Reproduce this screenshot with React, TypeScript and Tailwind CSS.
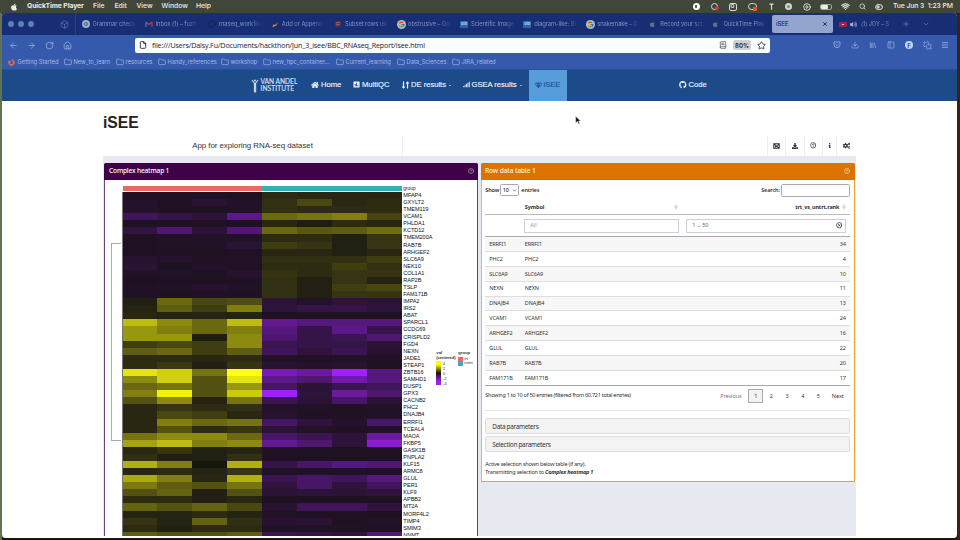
import React from "react";
import {
  FaApple, FaGithub, FaHome, FaSignal, FaGem, FaDownload, FaCogs, FaInfo,
  FaFirefoxBrowser, FaPoll, FaVolumeUp, FaLongArrowAltDown, FaLongArrowAltUp,
} from "react-icons/fa";
import { FcGoogle } from "react-icons/fc";
import {
  ArrowLeft, ArrowRight, RotateCw, House, Folder, File, Star, Menu, Puzzle, Download, Search,
  Wifi, Plus, ChevronDown, X, CircleHelp, CircleX, PanelLeft, Library,
  ToggleLeft, CirclePlay, BookText, Box,
} from "lucide-react";

type Gene = [string, number[]];

// Levels run from -20 (purple) to 20 (yellow).
const genes: Gene[] = [
  ["MFAP4", [-1, -1, -1, -0.5, 2, 1.5, 1.5, 1.5]],
  ["GXYLT2", [-2, -0.5, -3, -1.5, 2.5, 5, 1.5, 2]],
  ["TMEM119", [-2, -1, -0.5, -1.5, 2.5, 2, 2, 2]],
  ["VCAM1", [-7, -5, -3.5, -11, 8, 9, 10, 4.5]],
  ["PHLDA1", [-0.5, -0.5, -1, -0.5, 1.5, 0.2, 2, 1.5]],
  ["KCTD12", [-4.5, -9, -3.5, -9.5, 8, 6.5, 7, 8.5]],
  ["TMEM200A", [-0.5, -1.5, -1.5, -1.5, 2, 2, 0.5, 3]],
  ["RAB7B", [-1, -1.5, -1.5, -3, 4, 3, 0.5, 3]],
  ["ARHGEF2", [-0.5, -1, -0.5, -1, 1.5, 1.5, 0.5, 1.5]],
  ["SLC6A9", [-2.5, -2, -1, -1.5, 2.5, 2.5, 2.5, 4]],
  ["NEK10", [-3, -0.5, -2, -1, 2, 2, 4, 2.5]],
  ["COL1A1", [-1.5, -1.5, -0.5, -2.5, 3, 2, 3, 3]],
  ["RAP2B", [-0.5, -1, -0.5, -1, 2.5, 0.5, 3, 1]],
  ["TSLP", [-1, -1.5, -2.5, -1.5, 2.5, 0.5, 4, 5]],
  ["FAM171B", [-1, -1, -1, -1, 2.5, 0.5, 3, 3]],
  ["IMPA2", [0.5, 8, 5, 5.5, -3.5, -2, -4, -3]],
  ["IRS2", [1, 7, 4, 10, -3.5, -5, -5, -3.5]],
  ["ABAT", [1.5, 1, 1, 1, -0.5, -0.5, -0.5, -0.5]],
  ["SPARCL1", [15, 11, 8, 15, -12, -10, -10, -10]],
  ["CCDC69", [12, 10, 8, 10, -10, -5, -11, -5.5]],
  ["CRISPLD2", [12, 12, 0.2, 11, -9, -5, -6, -9]],
  ["FGD4", [4, 5, 4, 11, -6, -5, -5, -3]],
  ["NEXN", [7, 8, 4, 7, -7, -4, -6, -2.5]],
  ["JADE1", [2, 2, 1.5, 2, -1, -1, -1.5, -1]],
  ["STEAP1", [2, 3.5, 0.5, 3, -2.5, -2, -2.5, -0.5]],
  ["ZBTB16", [18, 16.5, 9, 20, -15, -13, -20, -10]],
  ["SAMHD1", [11, 16.5, 6, 18, -11, -9, -14, -10]],
  ["DUSP1", [8, 9, 6, 12, -8, -3, -6, -7]],
  ["GPX3", [10, 19, 6, 16, -20, -3.5, -13, -9]],
  ["CACNB2", [6, 11, 1, 9, -6, -3, -8, -3]],
  ["PHC2", [1.5, 3, 2, 2.5, -2, -1.5, -1, -1.5]],
  ["DNAJB4", [1.5, 5, 4, 1.5, -2.5, -1, -1, -1.5]],
  ["ERRFI1", [1.5, 10, 8, 9, -8, -4, -2, -8]],
  ["TCEAL4", [1.5, 6, 2, 3, -3, -1.5, -1, -1.5]],
  ["MAOA", [9, 11, 11, 8, -8, -6, -3.5, -13]],
  ["FKBP5", [13, 15, 10, 11, -12, -9, -3.5, -17]],
  ["GASK1B", [1.5, 3, 0.5, 1, -1, -0.5, -0.5, -0.5]],
  ["PNPLA2", [2.5, 0.5, 0.5, 2.5, -1, -0.5, -0.5, -0.5]],
  ["KLF15", [14, 10, 0, 14, -5, -8, -10, -9]],
  ["ARMC8", [1.5, 2, 1, 3, -1, -1, -1, -1]],
  ["GLUL", [13.5, 10, 1.5, 14, -6, -8, -7, -10]],
  ["PER1", [9.5, 7, 6, 9, -4, -8, -4, -7]],
  ["KLF9", [6, 7.5, 0.5, 6, -3, -3.5, -3, -4]],
  ["APBB2", [2, 2, 0.5, 1.5, -0.5, -0.5, -0.5, -0.5]],
  ["MT2A", [7.5, 6, 7.5, 5, -2.5, -7, -7, -4]],
  ["MORF4L2", [1, 1, 2, 1, -1.5, -0.5, -0.5, -0.5]],
  ["TIMP4", [3, 1, 7.5, 2.5, -2.5, -3, -0.5, -1.5]],
  ["SMIM3", [2, 0.5, 2, 2, -1, -1, -1, -1]],
  ["NNMT", [7, 6, 6, 7, -6, -5, -4, -10]],
];

function cellColor(level: number): string {
  if (level === 0) return "rgb(21,22,13)";
  const t = Math.pow(Math.abs(level) / 20, 1.2);
  const from = level > 0 ? [31, 29, 18] : [28, 17, 30];
  const to = level > 0 ? [255, 255, 14] : [160, 32, 245];
  return `rgb(${from.map((c, i) => Math.round(c + (to[i] - c) * t)).join(",")})`;
}

const rows: [string, number][] = [
  ["ERRFI1", 34], ["PHC2", 4], ["SLC6A9", 10], ["NEXN", 11], ["DNAJB4", 13],
  ["VCAM1", 24], ["ARHGEF2", 16], ["GLUL", 22], ["RAB7B", 20], ["FAM171B", 17],
];

const blue = <span className="flex h-[7px] w-[8px] items-center justify-center bg-[#2a66ab] text-[4px] font-bold text-[#b9cff0]">bio</span>;
const apple = <FaApple className="size-[6.5px] text-[#5f7189]" />;
const google = <span className="flex size-[9px] items-center justify-center rounded-full bg-[#aebbd8]"><FcGoogle className="size-[7px]" /></span>;

const gmail = (
  <svg viewBox="0 0 8 6" className="h-[6px] w-[8px]" fill="none" strokeWidth="1.3">
    <path d="M1 6V1" stroke="#4a78c8" />
    <path d="M1 1l3 2.6L7 1" stroke="#c0392f" />
    <path d="M7 6V1" stroke="#b5384a" />
  </svg>
);
const hub = (
  <svg viewBox="0 0 8 8" className="size-[8px]" fill="none" stroke="#10204f" strokeWidth="1.4">
    <circle cx="4" cy="4" r="3" strokeDasharray="2 0.9" />
  </svg>
);

const tabs: [React.ReactNode, string][] = [
  [<span className="flex size-[8px] items-center justify-center rounded-full bg-[#9aabd0]"><span className="size-[4px] rounded-full border border-[#46608f]" /></span>, "Grammar check"],
  [gmail, "Inbox (1) – fuzh"],
  [hub, "rnaseq_workflo"],
  [<svg viewBox="0 0 8 8" className="size-[8px]"><path d="M1 7l2-3 1 1 3-3-2 4z" fill="#d98237" /></svg>, "Add or Append"],
  [<svg viewBox="0 0 8 8" className="size-[8px]"><rect x="1" y="1" width="6" height="6" rx="2" fill="#4a3458" /><path d="M2 3l4-1M2 5l4-1" stroke="#c95b3f" /></svg>, "Subset rows usi"],
  [google, "obstrusive – Go"],
  [blue, "Scientific Image"],
  [blue, "diagram-like: Bi"],
  [google, "snakemake – G"],
  [apple, "Record your scr"],
  [apple, "QuickTime Play"],
];

const bookmarks: [string, string][] = [
  ["New_to_learn", "w-[52px]"], ["resources", "w-[42px]"], ["Handy_references", "w-[63px]"],
  ["workshop", "w-[42px]"], ["new_hpc_container...", "w-[73px]"], ["Current_learning", "w-[61px]"],
  ["Data_Sciences", "w-[55px]"], ["JIRA_related", "w-[60px]"],
];

function MenuBar() {
  return (
    <div className="flex h-[13px] shrink-0 items-center bg-[#41463b] font-['Inter',sans-serif] text-[6.8px] leading-none text-[#eceee8]">
      <FaApple className="ml-[10px] size-[8px]" />
      <span className="ml-[9px] w-[66px] pt-[0.5px] font-bold tracking-[-0.08px]">QuickTime Player</span>
      <span className="w-[21.5px] pt-[0.5px] font-medium">File</span>
      <span className="w-[22px] pt-[0.5px] font-medium">Edit</span>
      <span className="w-[25px] pt-[0.5px] font-medium">View</span>
      <span className="w-[34.5px] pt-[0.5px] font-medium">Window</span>
      <span className="pt-[0.5px] font-medium">Help</span>
      <div className="ml-auto flex items-center">
        <span className="mr-[11px] flex size-[7px] items-center justify-center rounded-full bg-white"><span className="size-[2.5px] rounded-full bg-[#41463b]" /></span>
        <span className="relative mr-[11px] size-[7px] rounded-full border border-[#d9dcd4]">
          <span className="absolute -bottom-[1px] left-[3px] size-[4px] rounded-full bg-[#d33c35]" />
        </span>
        <span className="mr-[11px] flex size-[8px] items-center justify-center rounded-[2px] border border-[#d9dcd4] text-[5px] font-bold">O</span>
        <span className="relative mr-[12px] h-[7px] w-[9px] rounded-full border border-[#d9dcd4]">
          <span className="absolute -bottom-[2px] left-[4px] size-[4px] bg-[#e6552b]" />
        </span>
        <svg viewBox="0 0 6 8" className="mr-[11px] h-[7px] w-[5px]" fill="none" stroke="#d9dcd4" strokeWidth="1.4"><path d="M0.5 1.2h5M3 1v7" /></svg>
        <span className="mr-[11px] flex size-[7.5px] items-center justify-center rounded-full bg-[#d5d8d2]"><span className="size-[3px] rounded-full bg-[#7d8a94]" /></span>
        <CirclePlay className="mr-[9px] size-[8px]" strokeWidth={2.5} />
        <span className="mr-[9px] flex h-[6px] w-[12px] items-center rounded-[2px] border border-[#a5a99f]"><span className="h-full w-[7px] rounded-[1px] bg-[#eceee8]" /></span>
        <Wifi className="mr-[9px] size-[9px]" strokeWidth={3} />
        <Search className="mr-[9px] size-[7px]" strokeWidth={2.5} />
        <ToggleLeft className="mr-[10px] size-[8px]" strokeWidth={3} />
        <span className="mr-[9px] w-[58px] whitespace-nowrap pt-[0.5px] font-medium tracking-[-0.08px]">Tue Jun 3&nbsp; 1:23 PM</span>
      </div>
    </div>
  );
}

function TabBar() {
  return (
    <div className="flex h-[22px] shrink-0 items-center bg-[#172d74] text-[5.8px] text-[#8093c4]">
      <div className="ml-[6px] flex w-[46px] gap-[4px]">
        <span className="size-[6px] rounded-full bg-[#5f81ba]" />
        <span className="size-[6px] rounded-full bg-[#5f81ba]" />
        <span className="size-[6px] rounded-full bg-[#5f81ba]" />
      </div>
      <div className="flex h-full w-[21.5px] items-center border-r border-[#263e85] pl-[6px]"><Box className="size-[9px] text-[#6177b0]" /></div>
      <div className="flex pl-[6px]">
        {tabs.map(([icon, label]) => (
          <div key={label} className="flex w-[63.1px] shrink-0 items-center">
            <span className="flex w-[11px] shrink-0 items-center">{icon}</span>
            <span className="whitespace-nowrap leading-[10px] tracking-[-0.06px] [mask-image:linear-gradient(to_right,black_75%,rgba(0,0,0,0.25))]">{label}</span>
          </div>
        ))}
      </div>
      <div className="-ml-[3.5px] flex h-[18px] w-[61px] shrink-0 items-center justify-between rounded-[2px] bg-[#93a4cf] pl-[4px] pr-[5px] font-semibold text-[#213a80]">
        <span>iSEE</span>
        <X className="size-[6px] text-[#172850]" strokeWidth={3.5} />
      </div>
      <span className="ml-[6px] flex h-[5px] w-[8px] items-center justify-center rounded-[1px] bg-[#ad1d4c]"><span className="h-px w-[2px] bg-[#e5b9c9]" /></span>
      <FaVolumeUp className="ml-[3px] size-[7px] text-[#a5b5da]" />
      <span className="ml-[4px] w-[31px] whitespace-nowrap text-[5.6px] tracking-[-0.06px] [mask-image:linear-gradient(to_right,black_75%,rgba(0,0,0,0.2))]">(1) JOY – S</span>
      <Plus className="ml-[10px] size-[8px] text-[#6d82ba]" />
      <ChevronDown className="ml-[12px] size-[8px] text-[#6d82ba]" />
    </div>
  );
}

function AddressBar() {
  return (
    <div className="flex h-[20px] shrink-0 items-center text-[#9eb4e2]">
      <ArrowLeft className="ml-[7px] size-[9px]" />
      <ArrowRight className="ml-[9px] size-[9px]" />
      <RotateCw className="ml-[9px] size-[9px]" />
      <House className="ml-[9px] size-[9px]" />
      <div className="ml-[63px] flex h-[15px] w-[635px] items-center rounded-[2px] bg-[#fafcff] text-[#1c1e24]">
        <File className="ml-[4px] size-[8px]" strokeWidth={2.5} />
        <span className="ml-[5px] whitespace-nowrap font-['Open_Sans',sans-serif] text-[7.15px] tracking-[-0.15px]">file:///Users/Daisy.Fu/Documents/hackthon/Jun_3_isee/BBC_RNAseq_Report/isee.html</span>
        <BookText className="ml-auto size-[8px] text-[#44474f]" />
        <span className="ml-[6px] flex h-[10px] w-[18px] items-center justify-center rounded-[2px] bg-[#cfd0d3] text-[6px] font-semibold">80%</span>
        <Star className="ml-[6px] mr-[4px] size-[9px]" />
      </div>
      <svg viewBox="0 0 24 24" className="ml-[63px] size-[8px]" fill="none" stroke="currentColor" strokeWidth="2.4">
        <path d="M3 3h18v8a9 9 0 0 1-18 0zM7 9l5 5 5-5" />
      </svg>
      <Download className="ml-[10px] size-[8px]" />
      <Library className="ml-[10px] size-[8px]" />
      <PanelLeft className="ml-[10px] size-[8px]" />
      <span className="ml-[10px] flex size-[8px] items-center justify-center rounded-full bg-[#c5d3ef] text-[6px] font-bold text-[#3357a6]">F</span>
      <Puzzle className="ml-[10px] size-[9px] -rotate-90" />
      <Menu className="ml-[9px] size-[8px]" strokeWidth={2.5} />
    </div>
  );
}

function Bookmarks() {
  return (
    <div className="flex h-[14px] shrink-0 items-center text-[5.75px] text-[#a4b9e6]">
      <FaFirefoxBrowser className="ml-[6px] size-[7px] text-[#df6c52]" />
      <span className="ml-[2.5px] w-[46px] whitespace-nowrap">Getting Started</span>
      {bookmarks.map(([name, width]) => (
        <div key={name} className={`flex shrink-0 items-center whitespace-nowrap ${width}`}>
          <Folder className="mr-[2px] size-[8px] shrink-0" />
          <span>{name}</span>
        </div>
      ))}
    </div>
  );
}

function SiteNav() {
  return (
    <div className="flex h-[32px] shrink-0 items-center border-t border-[#23519a] bg-[#1d4a88] font-['Liberation_Sans',Arial,sans-serif] text-[7.6px] text-[#eef3fa] [-webkit-text-stroke:0.15px]">
      <svg viewBox="0 0 8 16" className="ml-[249px] h-[15px] w-[8px]" fill="none" stroke="#d5e2f2" strokeWidth="1.1">
        <path d="M0.8 2.2L4 6.5L7.2 2.2M3.4 6.5V15.5M4.7 6.5V15.5" />
        <circle cx="4" cy="2.6" r="1" fill="#d5e2f2" stroke="none" />
      </svg>
      <div className="ml-[1.5px] w-[50.5px] font-['Lato',sans-serif] text-[6.6px] leading-[7px] text-[#d5e2f2]">
        <div className="whitespace-nowrap">VAN ANDEL</div>
        <div className="whitespace-nowrap tracking-[0.1px]">INSTITUTE</div>
      </div>
      <div className="flex w-[42px] items-center gap-[2px]"><FaHome className="size-[8px]" />Home</div>
      <div className="flex w-[47.5px] items-center gap-[2px]"><FaPoll className="size-[7px]" />MultiQC</div>
      <div className="flex w-[62px] items-center">
        <FaLongArrowAltDown className="-mr-[1px] h-[8px] w-[5px]" /><FaLongArrowAltUp className="mr-[1.5px] h-[8px] w-[5px]" />
        DE results<span className="ml-[2.5px] mt-px border-x-[1.5px] border-t-[1.5px] border-x-transparent border-t-white" />
      </div>
      <div className="flex w-[66px] items-center">
        <FaSignal className="mr-[2px] size-[7px]" />GSEA results<span className="ml-[3px] mt-px border-x-[1.5px] border-t-[1.5px] border-x-transparent border-t-white" />
      </div>
      <div className="flex h-full w-[38px] items-center gap-[2px] bg-[#569dd9] pl-[6px] text-[#254c9b]"><FaGem className="size-[7px]" />iSEE</div>
      <div className="ml-[112.5px] flex items-center gap-[2px]"><FaGithub className="size-[7.5px]" />Code</div>
    </div>
  );
}

function Heatmap() {
  return (
    <div className="flex h-[356px] flex-col overflow-hidden border-x border-[#6a4379] bg-white font-['Liberation_Sans',Arial,sans-serif] text-[#222]">
      <div className="ml-[17.5px] mt-[6px] flex h-[5.5px] shrink-0">
        <div className="w-[139.8px] bg-[#ee6862]" />
        <div className="w-[140px] bg-[#33b1b7]" />
        <span className="pl-px text-[4.8px] leading-[6px]">group</span>
      </div>
      <div className="mt-[1px] flex">
        <div className="w-[16.5px] shrink-0 pl-[5.5px]">
          <div className="mt-[50.5px] h-[198.5px] w-[10.5px] border-y border-l border-[#aaa]" />
        </div>
        <div className="flex w-[280.8px] shrink-0 flex-col border-l border-[#777]">
          {genes.map(([name, levels]) => (
            <div key={name} className="grid h-[7.08px] shrink-0 grid-cols-8">
              {levels.map((level, i) => <span key={i} style={{ backgroundColor: cellColor(level) }} />)}
            </div>
          ))}
        </div>
        <div className="w-[32px] shrink-0 pl-[1px] text-[5.6px] text-[#111]">
          {genes.map(([name]) => <div key={name} className="h-[7.08px] leading-[7.5px] tracking-[-0.06px]">{name}</div>)}
        </div>
        <div className="ml-[2px] mt-[159px] flex text-[4.2px] font-bold leading-[4.5px] text-[#333]">
          <div className="w-[22px]">
            <div>val</div>
            <div className="whitespace-nowrap tracking-[-0.1px]">(centered)</div>
            <div className="mt-[1px] flex">
              <div className="h-[24px] w-[5px] bg-[linear-gradient(to_bottom,#ffff00_15%,#191510_50%,#a020f0_85%)]" />
              <div className="flex h-[24px] flex-col justify-between pl-[1.5px] font-normal leading-[5px]">
                <span>4</span><span>2</span><span>0</span><span>-2</span><span>-4</span>
              </div>
            </div>
          </div>
          <div>
            <div className="mb-[1px]">group</div>
            <div className="flex items-center font-normal"><span className="mr-[1.5px] size-[4.5px] bg-[#ee6862]" />trt</div>
            <div className="flex items-center font-normal"><span className="mr-[1.5px] size-[4.5px] bg-[#33b1b7]" />untrt</div>
          </div>
        </div>
      </div>
    </div>
  );
}

function SortMark() {
  return (
    <svg viewBox="0 0 4 6" className="h-[6px] w-[4px] shrink-0" fill="none" stroke="#c0c0c0" strokeWidth="0.6">
      <path d="M0.7 2.5L2 0.7L3.3 2.5ZM0.7 3.5L2 5.3L3.3 3.5Z" />
    </svg>
  );
}

function DataTable() {
  return (
    <div className="h-[302px] border border-t-0 border-[#eba33d] border-l-[#b9b9c0] border-b-[#b9a58c] bg-white pl-[3.3px] pr-[4.2px] text-[5.5px] text-[#333]">
      <div className="flex h-[21px] items-center font-semibold tracking-[-0.12px]">
        <span className="w-[13.5px]">Show</span>
        <span className="ml-[1.5px] mr-[2px] flex h-[12px] w-[19px] items-center justify-between rounded-[1.5px] border border-[#a9a9a9] pl-[1.5px] pr-[1px] font-medium">10<ChevronDown className="size-[5px]" strokeWidth={3} /></span>
        <span>entries</span>
        <span className="ml-auto mr-[1px]">Search:</span>
        <span className="h-[13px] w-[69px] rounded-[1.5px] border border-[#aaa]" />
      </div>
      <div className="flex h-[14.5px] items-center border-b border-[#bbb] font-bold tracking-[-0.1px]">
        <span className="ml-[39.5px] w-[149.5px]">Symbol</span>
        <SortMark />
        <span className="ml-auto mr-[2.5px] tracking-[-0.12px]">trt_vs_untrt.rank</span>
        <span className="mr-[4px]"><SortMark /></span>
      </div>
      <div className="flex h-[22px] items-center border-b border-[#aaa]">
        <span className="ml-[39px] flex h-[14px] w-[155px] items-center border border-[#cfcfdb] pl-[5px] text-[#999]">All</span>
        <span className="ml-[7px] flex h-[14px] w-[160px] items-center justify-between border border-[#cfcfdb] pl-[5px] pr-[3px] tracking-[-0.1px] text-[#666]">1 ... 50<CircleX className="size-[6.5px] text-[#222]" strokeWidth={2.5} /></span>
      </div>
      {rows.map(([gene, rank], i) => (
        <div key={gene} className={`flex h-[14.9px] items-center border-b tracking-[-0.13px] ${i === 9 ? "border-[#a8a8a8]" : "border-[#dedede]"} ${i % 2 ? "bg-white" : "bg-[#f7f7f7]"}`}>
          <span className="w-[36px] pl-[4px]">{gene}</span>
          <span className="pl-[3.5px]">{gene}</span>
          <span className="ml-auto pr-[4px]">{rank}</span>
        </div>
      ))}
      <div className="flex h-[20px] items-center">
        <span className="-mt-[1px] tracking-[-0.27px]">Showing 1 to 10 of 50 entries (filtered from 60,721 total entries)</span>
        <span className="ml-auto mr-[7px] tracking-[-0.1px] text-[#777]">Previous</span>
        <span className="flex h-[14.5px] w-[14.5px] items-center justify-center border border-[#aaa] bg-[#f3f3f3]">1</span>
        {[2, 3, 4, 5].map((n) => <span key={n} className="w-[15.7px] pl-[1px] text-center">{n}</span>)}
        <span className="ml-[6px] mr-[6px]">Next</span>
      </div>
      <div className="mb-[7px] h-[5.5px] border-b border-[#e6e6e6]" />
      <div className="mb-[2px] flex h-[16px] items-center rounded-[1.5px] border border-[#dcdcdc] bg-[#f3f3f3] pl-[6px] text-[6.4px] tracking-[-0.3px]">Data parameters</div>
      <div className="mb-[8px] flex h-[16px] items-center rounded-[1.5px] border border-[#dcdcdc] bg-[#f3f3f3] pl-[6px] text-[6.4px] tracking-[-0.27px]">Selection parameters</div>
      <div className="leading-[8px] tracking-[-0.22px]">
        <div>Active selection shown below table (if any).</div>
        <div>Transmitting selection to <b className="italic">Complex heatmap 1</b></div>
      </div>
    </div>
  );
}

export default function App() {
  return (
    <div className="flex h-[540px] w-[960px] flex-col overflow-hidden bg-[#17180f] bg-[linear-gradient(90deg,#65724f_0,#65724f_2px,transparent_2px,transparent_957px,#33241c_957px)] font-['Inter',sans-serif]">
      <MenuBar />
      <div className="ml-[2px] flex h-[525px] w-[955px] flex-col overflow-hidden rounded-[4px] bg-white">
        <TabBar />
        <div className="flex h-[33.5px] shrink-0 flex-col bg-[#355aab]">
          <AddressBar />
          <Bookmarks />
        </div>
        <SiteNav />
        <div className="ml-[101px] flex w-[753px] flex-1 flex-col overflow-hidden font-['Noto_Sans',sans-serif]">
          <h1 className="mt-[12.5px] h-[22.5px] shrink-0 font-['Liberation_Sans',Arial,sans-serif] text-[15.7px] font-bold leading-[20px] text-[#222]">iSEE</h1>
          <div className="flex h-[20px] shrink-0 items-center text-[#333]">
            <div className="flex h-full w-[300px] items-center justify-center border-r border-[#ededed] font-['Liberation_Sans',Arial,sans-serif] text-[7.9px] tracking-[-0.04px]">App for exploring RNA-seq dataset</div>
            <div className="ml-auto flex h-full items-center">
              <span className="flex h-full w-[18.5px] items-center justify-center border-l border-[#eee]">
                <svg viewBox="0 0 8 7" className="h-[6px] w-[7px]" fill="none" stroke="#333" strokeWidth="1.2"><path d="M0.8 0.8h6.4v5.4H0.8ZM1 1l6 5M2 5l2-2M5 3l1.5-1.5" /></svg>
              </span>
              <span className="flex h-full w-[18.5px] items-center justify-center border-l border-[#eee]"><FaDownload className="size-[6px]" /></span>
              <span className="flex h-full w-[18px] items-center justify-center border-l border-[#eee]"><CircleHelp className="size-[6.5px]" strokeWidth={2.5} /></span>
              <span className="flex h-full w-[14.5px] items-center justify-center border-l border-[#eee]"><FaInfo className="size-[5.5px]" /></span>
              <span className="flex h-full w-[20px] items-center justify-center border-l border-[#eee]"><FaCogs className="size-[7.5px]" /></span>
            </div>
          </div>
          <div className="flex h-[380px] shrink-0 gap-[3px] bg-[#e6e9ef] pl-[1px] pt-[7.5px]">
            <section className="w-[374px] shrink-0">
              <header className="flex h-[16.5px] items-center justify-between rounded-t-[1.5px] bg-[#3f0147] pl-[5px] pr-[4px] text-[6.6px] text-white">
                <span className="font-medium tracking-[-0.17px]">Complex heatmap 1</span><CircleHelp className="size-[6px] text-[#d5bbdc]" />
              </header>
              <Heatmap />
            </section>
            <section className="w-[374px] shrink-0">
              <header className="flex h-[16.5px] items-center justify-between rounded-t-[1.5px] bg-[#dc7300] pl-[4px] pr-[5px] text-[6.6px] text-[#fff3e4]">
                <span className="font-medium tracking-[-0.11px]">Row data table 1</span><CircleHelp className="size-[6px]" />
              </header>
              <DataTable />
            </section>
          </div>
        </div>
        <div className="h-[2px] shrink-0 bg-white" />
      </div>
      <svg viewBox="0 0 10 14" className="absolute left-[575px] top-[116px] h-[9px] w-[6px]">
        <path d="M1 0V11L4 8.5L6 13L8 12L6 8H9.5Z" fill="#111" stroke="#fff" strokeWidth="0.8" />
      </svg>
    </div>
  );
}
